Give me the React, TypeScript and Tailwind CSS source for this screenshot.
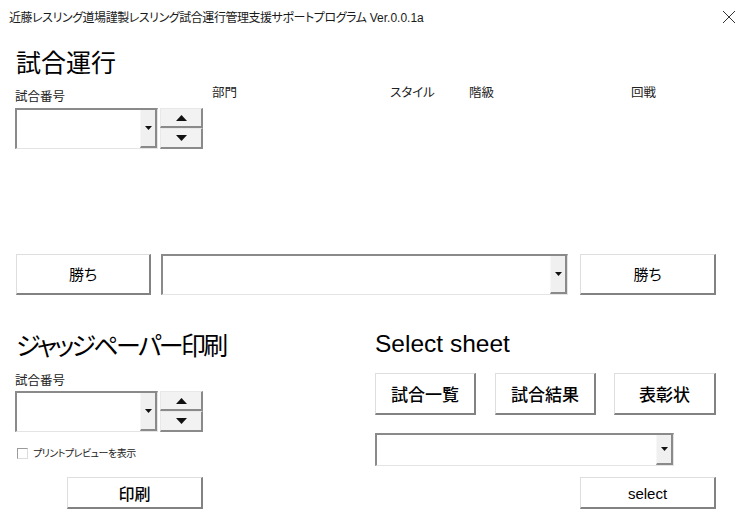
import React from "react";

function DownArrow({ big = false }: { big?: boolean }) {
  return big ? (
    <svg width="11" height="6" viewBox="0 0 11 6">
      <polygon points="0,0 11,0 5.5,6" fill="#111" />
    </svg>
  ) : (
    <svg width="7" height="4" viewBox="0 0 7 4">
      <polygon points="0,0 7,0 3.5,4" fill="#111" />
    </svg>
  );
}

function UpArrow() {
  return (
    <svg width="11" height="6" viewBox="0 0 11 6">
      <polygon points="0,6 11,6 5.5,0" fill="#111" />
    </svg>
  );
}

function Combo({ className }: { className: string }) {
  return (
    <div
      className={
        "flex bg-white border-t-2 border-l-2 border-r border-b border-t-[#8a8a8a] border-l-[#8a8a8a] border-r-[#e4e4e4] border-b-[#e4e4e4] " +
        className
      }
    >
      <div className="flex-1" />
      <div className="w-[17px] h-full flex items-center justify-center bg-[#f0f0f0] border-l border-l-[#f7f7f7] border-r-2 border-b-2 border-r-[#8a8a8a] border-b-[#8a8a8a]">
        <DownArrow />
      </div>
    </div>
  );
}

function Spin() {
  return (
    <div className="w-[43px] h-[41px] flex flex-col">
      <div className="h-[20px] flex items-center justify-center bg-[#f2f2f2] border-t border-l border-t-[#e8e8e8] border-l-[#e8e8e8] border-r-2 border-b-2 border-r-[#8a8a8a] border-b-[#8a8a8a]">
        <UpArrow />
      </div>
      <div className="h-[21px] flex items-center justify-center bg-[#f2f2f2] border-t border-l border-t-[#e8e8e8] border-l-[#e8e8e8] border-r-2 border-b-2 border-r-[#8a8a8a] border-b-[#8a8a8a]">
        <DownArrow big />
      </div>
    </div>
  );
}

function Btn({ className, children }: { className: string; children: React.ReactNode }) {
  return (
    <div
      className={
        "flex items-center justify-center bg-white border-t border-l border-t-[#dedede] border-l-[#dedede] border-r-2 border-b-2 border-r-[#828282] border-b-[#828282] " +
        className
      }
    >
      {children}
    </div>
  );
}

export default function App() {
  return (
    <div className="w-[744px] h-[532px] bg-white text-black overflow-hidden font-['Noto_Sans_CJK_JP',sans-serif] [font-feature-settings:'palt']">
      {/* title bar */}
      <div className="h-[34px] flex items-center justify-between pl-[9px] pr-[9px]">
        <div className="text-[12px] leading-[16px] text-[#1a1a1a] whitespace-nowrap">
          <span className="tracking-[-0.45px]">近藤レスリング道場謹製レスリング試合運行管理支援サポートプログラム</span>
          <span className="font-['Liberation_Sans',sans-serif]"> Ver.0.0.1a</span>
        </div>
        <svg width="14" height="14" viewBox="0 0 14 14" className="mr-[-1px]">
          <path d="M1 1 L13 13 M13 1 L1 13" stroke="#333" strokeWidth="1" fill="none" />
        </svg>
      </div>

      <div className="pl-[15px]">
        {/* 試合運行 */}
        <div className="mt-[12px] h-[30px] leading-[30px] text-[25px] pl-[1px]">試合運行</div>
        <div className="flex mt-[8px] h-[65px]">
          <div className="w-[197px] pt-[4px]">
            <div className="text-[12.5px] leading-[16px] text-[#222]">試合番号</div>
            <div className="mt-[4px] flex gap-[2px]">
              <Combo className="w-[143px] h-[41px]" />
              <Spin />
            </div>
          </div>
          <div className="w-[178px] text-[12.5px] leading-[16px] text-[#222]">部門</div>
          <div className="w-[79px] text-[12.5px] leading-[16px] text-[#222]">スタイル</div>
          <div className="w-[162px] text-[12.5px] leading-[16px] text-[#222]">階級</div>
          <div className="text-[12.5px] leading-[16px] text-[#222]">回戦</div>
        </div>

        {/* win row */}
        <div className="flex mt-[105px] pl-[1px]">
          <Btn className="w-[135px] h-[41px] text-[15px]">勝ち</Btn>
          <Combo className="ml-[10px] w-[407px] h-[41px]" />
          <Btn className="ml-[12px] w-[136px] h-[41px] text-[15px]">勝ち</Btn>
        </div>

        {/* bottom section */}
        <div className="flex">
          <div className="w-[360px]">
            <div className="mt-[34px] h-[30px] leading-[30px] text-[25px] pl-[1px] whitespace-nowrap tracking-[-2.6px]">
              ジャッジペーパー印刷
            </div>
            <div className="mt-[13px] text-[12.5px] leading-[16px] text-[#222]">試合番号</div>
            <div className="mt-[3px] flex gap-[2px]">
              <Combo className="w-[143px] h-[41px]" />
              <Spin />
            </div>
            <div className="mt-[14px] h-[14px] flex items-center">
              <div className="ml-[2px] w-[11px] h-[11px] bg-white border-t border-l border-r border-b border-t-[#9a9a9a] border-l-[#9a9a9a] border-r-[#dcdcdc] border-b-[#dcdcdc]" />
              <div className="ml-[5px] text-[10px] leading-[14px] text-[#222] whitespace-nowrap tracking-[-0.5px]">
                プリントプレビューを表示
              </div>
            </div>
            <Btn className="mt-[17px] ml-[52px] w-[136px] h-[32px] text-[16px] font-medium">印刷</Btn>
          </div>

          <div className="flex-1">
            <div className="mt-[34px] h-[30px] leading-[30px] text-[24.5px] font-['Liberation_Sans',sans-serif] whitespace-nowrap">
              Select sheet
            </div>
            <div className="mt-[14px] flex">
              <Btn className="w-[101px] h-[42px] text-[17px] font-medium">試合一覧</Btn>
              <Btn className="ml-[19px] w-[101px] h-[42px] text-[17px] font-medium">試合結果</Btn>
              <Btn className="ml-[18px] w-[102px] h-[42px] text-[17px] font-medium">表彰状</Btn>
            </div>
            <Combo className="mt-[18px] w-[299px] h-[33px]" />
            <Btn className="mt-[11px] ml-[205px] w-[136px] h-[32px] text-[15px] font-['Liberation_Sans',sans-serif]">
              <span className="mt-[3px]">select</span>
            </Btn>
          </div>
        </div>
      </div>
    </div>
  );
}
